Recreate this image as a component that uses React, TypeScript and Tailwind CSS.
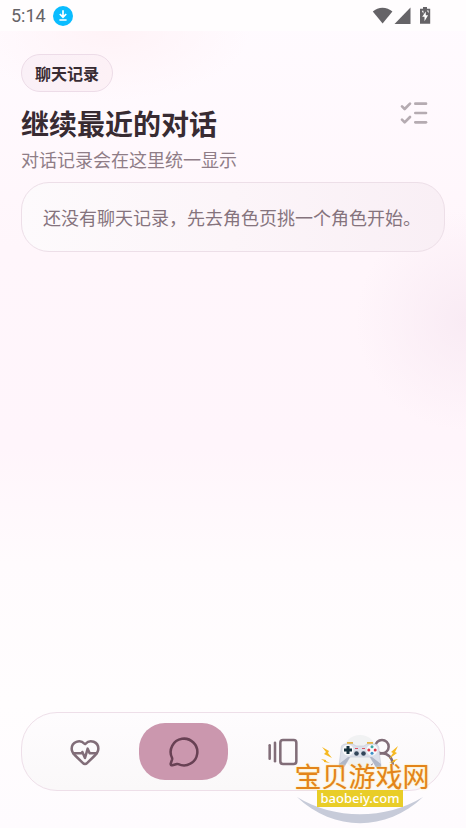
import {
  GalleryHorizontalEnd,
  HeartPulse,
  ListChecks,
  MessageCircle,
  UserRound,
} from "lucide-react";

const tabs = [
  { id: "home", label: "首页", icon: HeartPulse },
  { id: "chat", label: "聊天", icon: MessageCircle },
  { id: "roles", label: "角色", icon: GalleryHorizontalEnd },
  { id: "me", label: "我的", icon: UserRound },
];

function StatusBar() {
  return (
    <div className="flex h-[31px] shrink-0 items-center justify-between bg-[#fffdfe] pl-[11px] pr-[35px] text-[#656367]">
      <div className="flex items-center gap-[7px]">
        <span className="font-[Roboto] text-[18px] leading-[31px]">5:14</span>
        <svg width="20" height="20" viewBox="0 0 20 20">
          <circle cx="10" cy="10" r="10" fill="#0abcff" />
          <path d="M10 4.2v6.4M6.8 8l3.2 3.2L13.2 8M6.4 14h7.2" fill="none" stroke="#fff" strokeWidth="1.7" />
        </svg>
      </div>
      <svg width="59" height="18" viewBox="0 0 59 18" fill="currentColor">
        <path d="M0.8 4.6C6-.7 15-.7 20.4 4.6L10.6 16.6z" />
        <path d="M38.5 .6V17H22.5z" />
        <path d="M51 0h4v1.8h3.2V16.8H48V1.8h3z" />
        <path d="M53.8 4.5l-3.6 5.2h2.3v4.5l3.6-6h-2.3z" fill="#fff" />
        <path d="M49.8 3.8h1.6v3zM54.8 3.5h1.8v2.6z" fill="#fff" />
      </svg>
    </div>
  );
}

function TabBar({ active }: { active: string }) {
  return (
    <nav className="mx-[21px] mb-[37px] flex h-[79px] shrink-0 items-center gap-[10px] rounded-[36px] border border-[#eedfe9] bg-linear-to-b from-[#fefcfe] to-[#faf8f9] px-[18px]">
      {tabs.map(({ id, label, icon: Icon }) => (
        <button
          key={id}
          aria-label={label}
          className={
            id === active
              ? "flex h-[57px] flex-1 items-center justify-center rounded-[26px] bg-[#cb97ae] text-[#684154]"
              : "flex h-[57px] flex-1 items-center justify-center rounded-[26px] text-[#816d78]"
          }
        >
          <Icon size={32} strokeWidth={1.9} />
        </button>
      ))}
    </nav>
  );
}

// Selo do site, flutua sobre o canto da barra de navegação
function SiteBadge() {
  return (
    <div className="pointer-events-none absolute right-[34px] bottom-[4px] flex h-[90px] w-[140px] flex-col items-center">
      <svg className="absolute inset-0" width="140" height="90" viewBox="0 0 140 90">
        <circle cx="68" cy="18" r="17" fill="#f1f2f3" />
        {/* arco inferior */}
        <path d="M5 63C42 98 94 98 131 63C94 86 42 86 5 63z" fill="#c7cbd9" />
        {/* raios */}
        <g fill="#f6b922">
          <path d="M30 13l7 4-1 2 4 5-8-4 2-2z" />
          <path d="M29 25l5 1v1l4 2-6-1v-1z" />
          <path d="M106 12l-7 6 2 1-4 6 8-6-2-1z" />
          <path d="M106 25l-5 1v1l-4 2 6-1v-1z" />
        </g>
        {/* controle */}
        <path d="M55 8h6v3h-6zM75 8h6v3h-6z" fill="#e9b644" />
        <path
          d="M54 10h7l3 2h8l3-2h7c4 0 5 2 5 6l2 16c0 3-3 3-5 1l-6-10H58l-6 10c-2 2-5 2-5-1l2-16c0-4 1-6 5-6z"
          fill="#dce0ea"
          stroke="#c3c8d5"
          strokeWidth="0.6"
        />
        <path d="M47 30l9-7h2l-6 10c-2 2-5 2-5-1zM89 30l-9-7h-2l6 10c2 2 5 2 5-1z" fill="#b0b7c8" />
        <circle cx="56" cy="16" r="5.5" fill="#f8f9fb" />
        <path d="M54.5 12h3v2.5H60v3h-2.5V20h-3v-2.5H52v-3h2.5z" fill="#17323f" />
        <circle cx="80" cy="16" r="5.5" fill="#f8f9fb" />
        <circle cx="80" cy="12.8" r="1.5" fill="#3ca9a5" />
        <circle cx="83.2" cy="16" r="1.5" fill="#d83848" />
        <circle cx="76.8" cy="16" r="1.5" fill="#d83848" />
        <circle cx="80" cy="19.2" r="1.5" fill="#3d8fc7" />
        <circle cx="64.5" cy="19.5" r="2.3" fill="#33465a" />
        <circle cx="71.5" cy="19.5" r="2.3" fill="#33465a" />
        <path d="M63 14.5h3M70 14.5h3" stroke="#dc5465" strokeWidth="1.2" />
      </svg>
      <span className="relative mt-[28px] text-[27px] leading-[27px] whitespace-nowrap text-[#e3841a] [text-shadow:0_0_2px_#ffe89a,0_0_1px_#fff0b8]">
        宝贝游戏网
      </span>
      <span className="relative mt-px mr-[4px] h-[17px] w-[86px] bg-[#e9cd28] text-center font-['Noto_Sans'] text-[13px] leading-[17px] font-medium text-white">
        baobeiy.com
      </span>
    </div>
  );
}

export default function App() {
  return (
    <div className="relative flex min-h-screen flex-col overflow-hidden bg-[linear-gradient(180deg,#fffbff_0%,#fff6fb_30%,#fff5fb_54%,#fffbfd_68%,#fffdfe_85%,#fefbfe_100%)] font-['Noto_Sans_CJK_SC',sans-serif]">
      <StatusBar />
      <main className="flex-1 bg-[radial-gradient(circle_at_100%_290px,#f9ebf4_0px,#f9ebf400_110px),radial-gradient(ellipse_140px_70px_at_110px_0px,#fff3f7_0%,#fff3f700_100%)] px-[21px] pt-[23px]">
        <header className="flex items-center justify-between">
          <div>
            <div className="flex h-[38px] w-fit items-center rounded-full border border-[#eddce8] bg-linear-to-r from-[#faf0f7] to-[#fdf1f6] px-[13px] text-[16px] font-bold text-[#382b32]">
              聊天记录
            </div>
            <h1 className="mt-[11px] text-[28px] leading-[40px] font-bold text-[#382b32]">
              继续最近的对话
            </h1>
            <p className="mt-[3px] text-[18px] leading-[26px] text-[#8f7d87]">对话记录会在这里统一显示</p>
          </div>
          <button aria-label="多选" className="flex h-[62px] w-[62px] items-center justify-center text-[#b5abb1]">
            <ListChecks size={32} />
          </button>
        </header>
        <section className="mt-[10px] rounded-[28px] border border-[#eddfe8] bg-linear-to-r from-[#fdfafc] via-[#fcf5f9] to-[#f9eff5] p-[21px] text-[18px] leading-[26px] text-[#85737d]">
          还没有聊天记录，先去角色页挑一个角色开始。
        </section>
      </main>
      <TabBar active="chat" />
      <SiteBadge />
    </div>
  );
}
